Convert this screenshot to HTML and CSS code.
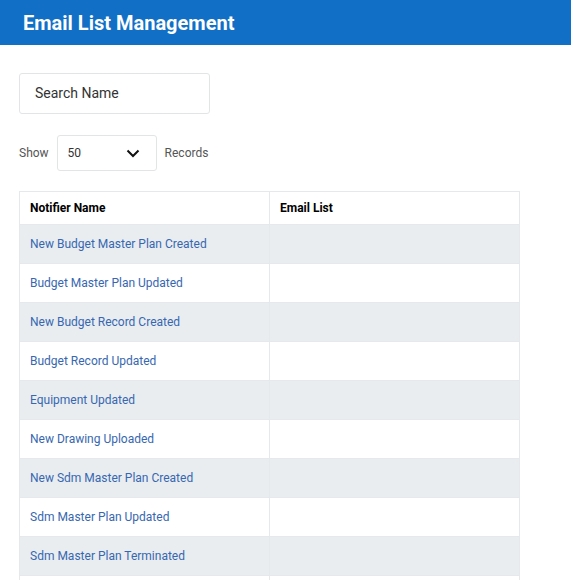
FILE: index.html
```html
<!DOCTYPE html>
<html lang="en">
<head>
    <meta charset="UTF-8">
    <meta name="viewport" content="width=device-width, initial-scale=1.0">
    <title>Email List Management</title>
    <link rel="stylesheet" href="styles.css">
</head>
<body>
    <div class="topbar">
        <h1>Email List Management</h1>
    </div>
    <div class="container">
        <input type="text" class="search" placeholder="Search Name" />
        <div class="show-row">
            <span>Show</span>
            <div class="select">
                <span>50</span>
                <svg width="14" height="9" viewBox="0 0 14 9"><path d="M1.5 1.5 L7 7 L12.5 1.5" fill="none" stroke="#111" stroke-width="2"/></svg>
            </div>
            <span>Records</span>
        </div>
        <table class="list">
            <thead>
                <tr>
                    <th>Notifier Name</th>
                    <th>Email List</th>
                </tr>
            </thead>
            <tbody>
                <tr><td><a href="#">New Budget Master Plan Created</a></td><td></td></tr>
                <tr><td><a href="#">Budget Master Plan Updated</a></td><td></td></tr>
                <tr><td><a href="#">New Budget Record Created</a></td><td></td></tr>
                <tr><td><a href="#">Budget Record Updated</a></td><td></td></tr>
                <tr><td><a href="#">Equipment Updated</a></td><td></td></tr>
                <tr><td><a href="#">New Drawing Uploaded</a></td><td></td></tr>
                <tr><td><a href="#">New Sdm Master Plan Created</a></td><td></td></tr>
                <tr><td><a href="#">Sdm Master Plan Updated</a></td><td></td></tr>
                <tr><td><a href="#">Sdm Master Plan Terminated</a></td><td></td></tr>
                <tr><td></td><td></td></tr>
            </tbody>
        </table>
    </div>
</body>
</html>
```

FILE: styles.css
```css
body {
    font-family: Roboto, "Liberation Sans", sans-serif;
    margin: 0;
    padding: 0;
    color: #222;
}
.topbar {
    background-color: #1170c6;
    height: 45px;
    display: flex;
    align-items: center;
    padding-left: 23px;
}
.topbar h1 {
    margin: 0;
    color: white;
    font-size: 20px;
    font-weight: 700;
}
.container {
    padding: 28px 19px 20px;
}
.search {
    display: block;
    box-sizing: border-box;
    width: 191px;
    height: 41px;
    padding: 0 15px 1px;
    border: 1px solid #e2e4e6;
    border-radius: 3px;
    font-family: inherit;
    font-size: 14px;
}
.search::placeholder {
    color: #333;
}
.show-row {
    display: flex;
    align-items: center;
    gap: 8px;
    margin-top: 21px;
    font-size: 12px;
    color: #555;
}
.select {
    box-sizing: border-box;
    width: 100px;
    height: 36px;
    border: 1px solid #e2e4e6;
    border-radius: 3px;
    display: flex;
    align-items: center;
    justify-content: space-between;
    padding: 0 16px 0 10px;
    color: #333;
}
.list {
    margin-top: 20px;
    width: 501px;
    border-collapse: collapse;
    font-size: 12px;
}
.list th, .list td {
    border: 1px solid #e6e9eb;
    text-align: left;
    padding: 0 10px;
    width: 50%;
}
.list th {
    height: 32px;
    color: #000;
    font-weight: 700;
}
.list td {
    height: 38px;
}
.list tbody tr:nth-child(odd) {
    background-color: #e9edf0;
}
.list a {
    color: #3767b0;
    text-decoration: none;
}
```
